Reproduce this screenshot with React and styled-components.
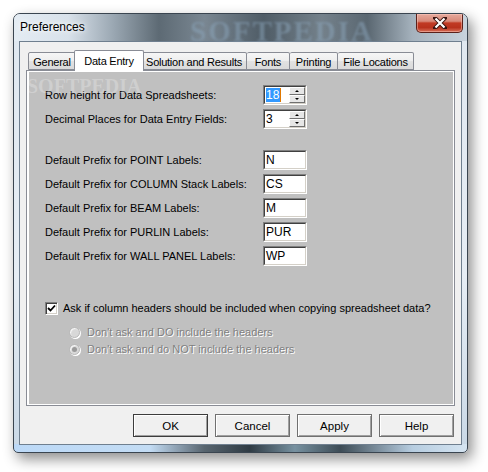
import React from 'react'
import styled, { createGlobalStyle } from 'styled-components'

const GlobalStyle = createGlobalStyle`
  html, body {
    margin: 0;
    padding: 0;
    background: #fff;
  }
  body {
    font-family: "Liberation Sans", Arial, sans-serif;
    font-size: 11px;
    color: #000;
  }
`

const Page = styled.div`
  width: 488px;
  height: 472px;
  padding: 13px 0 0 13px;
  box-sizing: border-box;
`

const Window = styled.div`
  position: relative;
  width: 455px;
  height: 440px;
  box-sizing: border-box;
  border: 1px solid #3a4550;
  border-radius: 7px 7px 5px 5px;
  padding: 0 5px 7px 5px;
  display: flex;
  flex-direction: column;
  background:
    linear-gradient(to right, #bcd9f7 0%, #c3dcf4 30%, #58656f 42%, #2f3b44 52%, #7791a0 62%, #3d4c56 72%, #b7cde0 88%, #d5e4f1 100%) bottom / 100% 8px no-repeat,
    linear-gradient(to bottom, #dfe7ef 0%, #e6edf4 60%, #c9d8e6 100%);
  box-shadow: 4px 6px 14px rgba(0, 0, 0, 0.45);
  overflow: hidden;
`

const TitleBar = styled.div`
  position: relative;
  height: 27px;
  margin: 0 -5px;
  padding: 0 5px 0 6px;
  display: flex;
  justify-content: space-between;
  align-items: flex-start;
  background: linear-gradient(to right, #e4ecf3 0%, #d8e1ea 12%, #9aa7b2 22%, #5d6a74 32%, #7a8792 42%, #4f5c66 55%, #74818b 68%, #5a6771 78%, #a5b2bd 88%, #c8d3dd 100%);
`

const Title = styled.div`
  position: relative;
  z-index: 1;
  margin-top: 6px;
  font-size: 12px;
  color: #000;
  text-shadow: 0 0 8px #fff, 0 0 4px #fff;
`

const Watermark = styled.div`
  position: absolute;
  left: 176px;
  top: 1px;
  font-family: "Liberation Serif", "Times New Roman", serif;
  font-weight: bold;
  font-size: 29px;
  letter-spacing: 2px;
  color: rgba(140, 166, 188, 0.5);
  filter: blur(0.8px);
  pointer-events: none;
`

const CloseButton = styled.div`
  position: relative;
  z-index: 1;
  width: 47px;
  height: 19px;
  margin-right: -1px;
  box-sizing: border-box;
  border: 1px solid #5b211b;
  border-top: none;
  border-radius: 0 0 5px 5px;
  background: linear-gradient(to bottom, #e6a99c 0%, #d88a7a 40%, #c13a24 50%, #b8321d 75%, #d7705a 100%);
  box-shadow: inset 0 0 0 1px rgba(255, 210, 200, 0.45);
  display: flex;
  align-items: center;
  justify-content: center;
`

const Client = styled.div`
  flex: 1;
  box-sizing: border-box;
  background: #f0f0f0;
  border: 1px solid #6f7f8f;
  padding: 8px 6px 7px 6px;
  display: flex;
  flex-direction: column;
`

const TabStrip = styled.div`
  display: flex;
  align-items: flex-end;
  height: 20px;
  padding-left: 2px;
  position: relative;
  z-index: 1;
`

const Tab = styled.div`
  box-sizing: border-box;
  width: ${p => p.$w + (p.$active ? 4 : 0)}px;
  height: ${p => (p.$active ? '21px' : '18px')};
  margin: ${p => (p.$active ? '0 -2px -1px -2px' : '0')};
  padding-top: ${p => (p.$active ? '2px' : '1px')};
  border: 1px solid #898c95;
  border-bottom: ${p => (p.$active ? 'none' : '1px solid #898c95')};
  border-left: ${p => (p.$first || p.$active ? '1px solid #898c95' : 'none')};
  border-radius: 2px 2px 0 0;
  background: ${p => (p.$active ? '#fff' : 'linear-gradient(to bottom, #f6f6f6 0%, #eeeeee 50%, #e2e2e2 51%, #dadada 100%)')};
  font-size: 11px;
  letter-spacing: -0.25px;
  line-height: 16px;
  text-align: center;
  white-space: nowrap;
  position: relative;
  z-index: ${p => (p.$active ? 2 : 1)};
`

const TabPage = styled.div`
  flex: 0 0 336px;
  box-sizing: border-box;
  border: 1px solid #898c95;
  background: #fff;
  padding: 1px 1px 1px 2px;
  display: flex;
`

const Panel = styled.div`
  position: relative;
  flex: 1;
  background: #c0c0c0;
  padding: 13px 0 0 16px;
  overflow: hidden;
`

const PanelMark = styled.div`
  position: absolute;
  left: -2px;
  top: 3px;
  font-family: "Liberation Serif", serif;
  font-weight: bold;
  font-size: 20px;
  color: rgba(255, 255, 255, 0.25);
  pointer-events: none;
`

const Rows = styled.div`
  display: flex;
  flex-direction: column;
  gap: 4px;
  margin-bottom: ${p => p.$after}px;
`

const Row = styled.div`
  display: flex;
  align-items: center;
  height: 20px;
`

const Label = styled.span`
  width: 218px;
  font-size: 11px;
`

const Sunken = styled.div`
  box-sizing: border-box;
  width: 44px;
  height: 20px;
  border-top: 1px solid #808080;
  border-left: 1px solid #808080;
  border-right: 1px solid #fff;
  border-bottom: 1px solid #fff;
  display: flex;
`

const Field = styled.div`
  flex: 1;
  display: flex;
  align-items: center;
  background: #fff;
  border-top: 1px solid #404040;
  border-left: 1px solid #404040;
  border-right: 1px solid #d4d0c8;
  border-bottom: 1px solid #d4d0c8;
  padding-left: 1px;
  font-size: 12px;
  line-height: 14px;
`

const Selected = styled.span`
  background: #3399ff;
  color: #fff;
  border-right: 1px solid #e07800;
  padding: 0 1px 0 0;
`

const Spin = styled.div`
  display: flex;
  flex-direction: column;
  margin-left: auto;
  width: 16px;
  height: 100%;
`

const SpinButton = styled.div`
  flex: 1;
  box-sizing: border-box;
  background: #e6e6e6;
  border-top: 1px solid #fff;
  border-left: 1px solid #fff;
  border-right: 1px solid #707070;
  border-bottom: 1px solid #707070;
  display: flex;
  align-items: center;
  justify-content: center;
`

const Arrow = styled.span`
  width: 0;
  height: 0;
  border-left: 2px solid transparent;
  border-right: 2px solid transparent;
  ${p => (p.$down ? 'border-top: 2px solid #000;' : 'border-bottom: 2px solid #000;')}
`

const CheckRow = styled.label`
  display: flex;
  align-items: center;
  gap: 5px;
  height: 14px;
  margin-left: 0;
`

const Box = styled.span`
  box-sizing: border-box;
  width: 13px;
  height: 13px;
  background: #fff;
  border-top: 1px solid #808080;
  border-left: 1px solid #808080;
  border-right: 1px solid #fff;
  border-bottom: 1px solid #fff;
  box-shadow: inset 1px 1px 0 #404040, inset -1px -1px 0 #d4d0c8;
  display: flex;
  align-items: center;
  justify-content: center;
`

const RadioList = styled.div`
  display: flex;
  flex-direction: column;
  gap: 3px;
  margin: 10px 0 0 24px;
`

const RadioRow = styled.div`
  display: flex;
  align-items: center;
  gap: 7px;
  height: 14px;
  color: #808080;
  text-shadow: 1px 1px 0 #fff;
`

const RadioDot = styled.span`
  position: relative;
  box-sizing: border-box;
  width: 11px;
  height: 11px;
  border-radius: 50%;
  background: #d8d8d8;
  border: 1px solid #b8b8b8;
  box-shadow: 1px 1px 0 #fff, inset 1px 1px 1px rgba(255, 255, 255, 0.8);
  &::after {
    content: '';
    display: ${p => (p.$on ? 'block' : 'none')};
    position: absolute;
    left: 2px;
    top: 2px;
    width: 5px;
    height: 5px;
    border-radius: 50%;
    background: #9a9a9a;
  }
`

const ButtonRow = styled.div`
  display: flex;
  justify-content: flex-end;
  gap: 7px;
  margin-top: 8px;
  padding-right: 1px;
`

const Button = styled.div`
  box-sizing: border-box;
  width: 75px;
  height: 23px;
  background: #f0f0f0;
  border: 1px solid ${p => (p.$default ? '#3c3c3c' : '#707070')};
  box-shadow: inset 1px 1px 0 #fff, inset -1px -1px 0 #a0a0a0;
  display: flex;
  align-items: center;
  justify-content: center;
  font-size: 11.5px;
`

const spinRows = [
  { label: 'Row height for Data Spreadsheets:', value: '18', selected: true },
  { label: 'Decimal Places for Data Entry Fields:', value: '3' },
]

const prefixRows = [
  { label: 'Default Prefix for POINT Labels:', value: 'N' },
  { label: 'Default Prefix for COLUMN Stack Labels:', value: 'CS' },
  { label: 'Default Prefix for BEAM Labels:', value: 'M' },
  { label: 'Default Prefix for PURLIN Labels:', value: 'PUR' },
  { label: 'Default Prefix for WALL PANEL Labels:', value: 'WP' },
]

const tabs = [
  { name: 'General', w: 48 },
  { name: 'Data Entry', w: 66 },
  { name: 'Solution and Results', w: 105 },
  { name: 'Fonts', w: 43 },
  { name: 'Printing', w: 48 },
  { name: 'File Locations', w: 76 },
]

export default function App() {
  return (
    <Page>
      <GlobalStyle />
      <Window>
        <TitleBar>
          <Watermark>SOFTPEDIA</Watermark>
          <Title>Preferences</Title>
          <CloseButton>
            <svg width="14" height="12" viewBox="0 0 14 12">
              <path d="M2 1 L12 11 M12 1 L2 11" stroke="#3a1410" strokeWidth="4" strokeLinecap="square" />
              <path d="M2.5 1.5 L11.5 10.5 M11.5 1.5 L2.5 10.5" stroke="#fff" strokeWidth="2.2" />
            </svg>
          </CloseButton>
        </TitleBar>
        <Client>
          <TabStrip>
            {tabs.map((t, i) => (
              <Tab key={t.name} $w={t.w} $first={i === 0} $active={t.name === 'Data Entry'}>{t.name}</Tab>
            ))}
          </TabStrip>
          <TabPage>
            <Panel>
              <PanelMark>SOFTPEDIA</PanelMark>
              <Rows $after={21}>
                {spinRows.map(r => (
                  <Row key={r.label}>
                    <Label>{r.label}</Label>
                    <Sunken>
                      <Field>
                        {r.selected ? <Selected>{r.value}</Selected> : r.value}
                        <Spin>
                          <SpinButton><Arrow /></SpinButton>
                          <SpinButton><Arrow $down /></SpinButton>
                        </Spin>
                      </Field>
                    </Sunken>
                  </Row>
                ))}
              </Rows>
              <Rows $after={35}>
                {prefixRows.map(r => (
                  <Row key={r.label}>
                    <Label>{r.label}</Label>
                    <Sunken>
                      <Field>{r.value}</Field>
                    </Sunken>
                  </Row>
                ))}
              </Rows>
              <CheckRow>
                <Box>
                  <svg width="9" height="9" viewBox="0 0 9 9">
                    <path d="M1 4 L3.5 6.5 L8 1.5" stroke="#000" strokeWidth="1.8" fill="none" />
                  </svg>
                </Box>
                Ask if column headers should be included when copying spreadsheet data?
              </CheckRow>
              <RadioList>
                <RadioRow><RadioDot />Don't ask and DO include the headers</RadioRow>
                <RadioRow><RadioDot $on />Don't ask and do NOT include the headers</RadioRow>
              </RadioList>
            </Panel>
          </TabPage>
          <ButtonRow>
            <Button $default>OK</Button>
            <Button>Cancel</Button>
            <Button>Apply</Button>
            <Button>Help</Button>
          </ButtonRow>
        </Client>
      </Window>
    </Page>
  )
}
